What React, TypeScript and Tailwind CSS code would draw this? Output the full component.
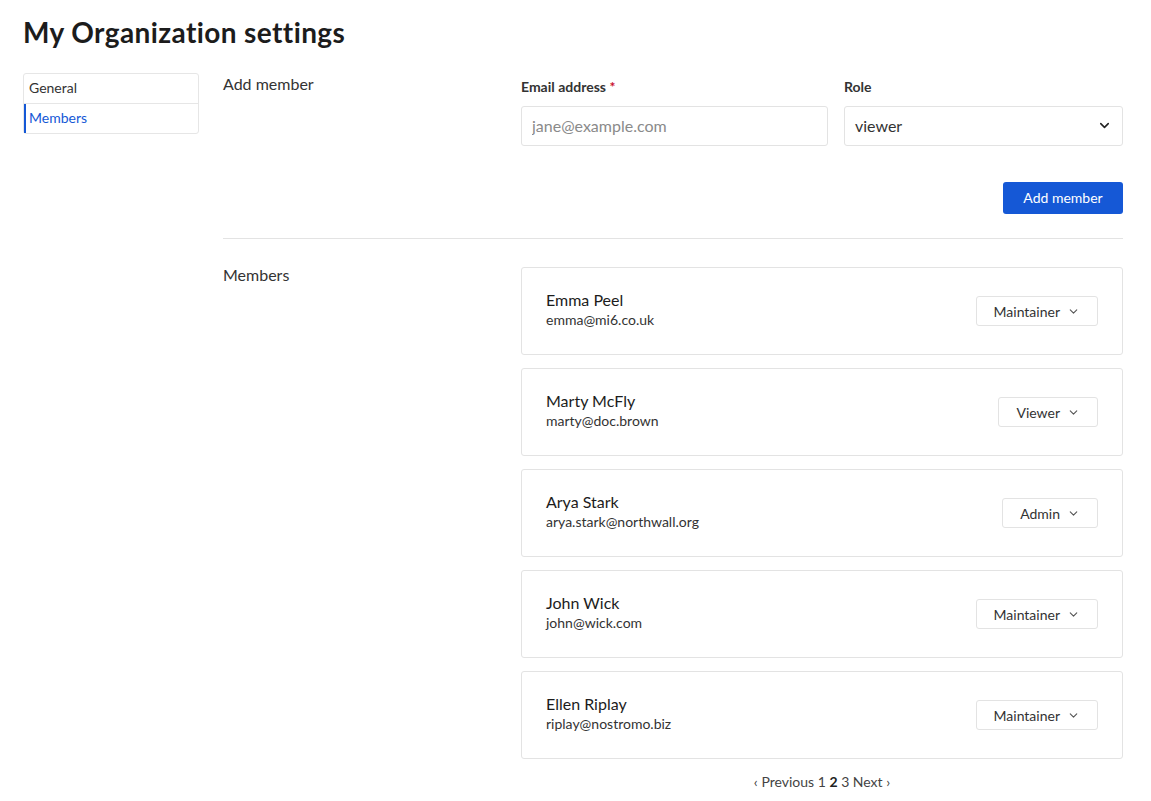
import React from 'react';
import { ChevronDown } from 'lucide-react';

const members = [
  { name: 'Emma Peel', email: 'emma@mi6.co.uk', role: 'Maintainer' },
  { name: 'Marty McFly', email: 'marty@doc.brown', role: 'Viewer' },
  { name: 'Arya Stark', email: 'arya.stark@northwall.org', role: 'Admin' },
  { name: 'John Wick', email: 'john@wick.com', role: 'Maintainer' },
  { name: 'Ellen Riplay', email: 'riplay@nostromo.biz', role: 'Maintainer' },
];

export default function App() {
  return (
    <div className="min-h-screen bg-white text-[#1c1c1c] pl-[23px] pr-[28px]" style={{ fontFamily: 'Lato, "Open Sans", sans-serif' }}>
      <h1 className="pt-[14px] text-[28px] font-bold leading-[36px] tracking-[0.4px]">My Organization settings</h1>

      <div className="mt-[23px] flex gap-[24px]">
        {/* Side nav */}
        <nav className="w-[176px] shrink-0 self-start rounded-[3px] border border-[#e6e6e6] text-[14px]">
          <a className="block h-[30px] border-b border-[#e6e6e6] px-[5px] leading-[28px] text-[#333]">General</a>
          <a className="block h-[29px] border-l-2 border-[#1558d6] px-[3px] leading-[28px] text-[#1558d6]">Members</a>
        </nav>

        <main className="flex-1">
          {/* Add member */}
          <section className="grid grid-cols-[298px_1fr] pb-[24px]">
            <h2 className="text-[16px] leading-[22px] text-[#333]">Add member</h2>
            <div>
              <div className="flex gap-[16px] pt-[4px]">
                <label className="w-[307px]">
                  <span className="block text-[14px] font-bold leading-[20px] text-[#333]">
                    Email address <span className="text-[#c8102e]">*</span>
                  </span>
                  <input
                    placeholder="jane@example.com"
                    className="mt-[9px] h-[40px] w-full rounded-[3px] border border-[#e3e3e3] px-[10px] pb-[1px] text-[16px] text-[#333] placeholder:text-[#8a8a8a] outline-none"
                  />
                </label>
                <label className="flex-1">
                  <span className="block text-[14px] font-bold leading-[20px] text-[#333]">Role</span>
                  <div className="mt-[9px] flex h-[40px] items-center justify-between rounded-[3px] border border-[#e3e3e3] pb-[1px] px-[10px] text-[16px] text-[#333]">
                    <span>viewer</span>
                    <ChevronDown size={15} strokeWidth={2.5} className="text-[#222]" />
                  </div>
                </label>
              </div>
              <div className="mt-[36px] flex justify-end">
                <button className="h-[32px] w-[120px] rounded-[3px] bg-[#1558d6] pb-[2px] text-[14px] text-white">Add member</button>
              </div>
            </div>
          </section>

          <hr className="border-[#e3e3e3]" />

          {/* Members */}
          <section className="grid grid-cols-[298px_1fr] pt-[28px]">
            <h2 className="-mt-[3px] text-[16px] leading-[22px] text-[#333]">Members</h2>
            <div>
              <ul className="flex flex-col gap-[13px]">
                {members.map((m) => (
                  <li key={m.email} className="flex h-[88px] items-center justify-between rounded-[3px] border border-[#e3e3e3] pl-[24px] pr-[24px]">
                    <div className="pb-[2px]">
                      <div className="text-[16px] leading-[20px] text-[#1c1c1c]">{m.name}</div>
                      <div className="text-[14px] leading-[20px] text-[#333]">{m.email}</div>
                    </div>
                    <button className="flex h-[30px] items-center gap-[7px] rounded-[3px] border border-[#e3e3e3] px-[17px] text-[14px] text-[#333]">
                      {m.role}
                      <ChevronDown size={13} strokeWidth={2} className="text-[#555]" />
                    </button>
                  </li>
                ))}
              </ul>
              <div className="mt-[12px] text-center text-[14px] text-[#444]">
                <a>‹ Previous</a> <a>1</a> <a className="font-bold text-[#222]">2</a> <a>3</a> <a>Next ›</a>
              </div>
            </div>
          </section>
        </main>
      </div>
    </div>
  );
}
